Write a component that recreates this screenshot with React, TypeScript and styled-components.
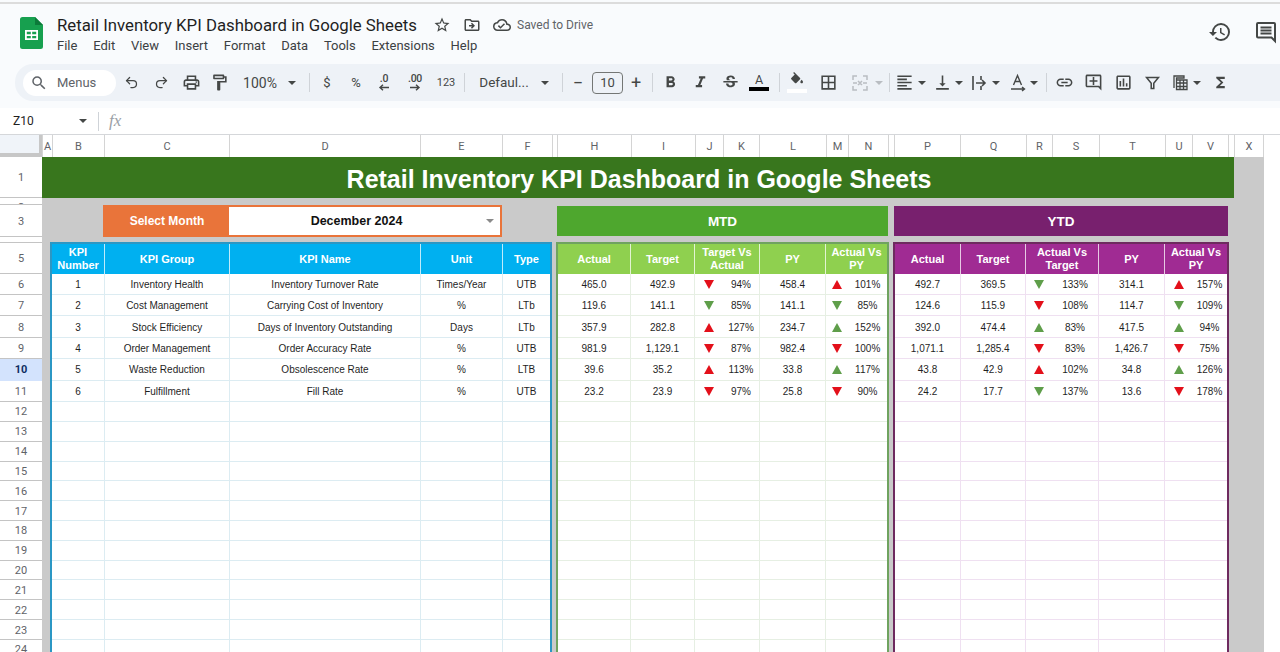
import styled, { createGlobalStyle } from 'styled-components';
import { Redo2, Undo2 } from 'lucide-react';
import {
  MdBorderAll,
  MdFormatAlignLeft,
  MdFormatBold,
  MdFormatItalic,
  MdFunctions,
  MdHistory,
  MdLink,
  MdOutlineAddComment,
  MdOutlineCloudDone,
  MdOutlineDriveFileMove,
  MdOutlineFormatPaint,
  MdOutlineInsertChart,
  MdOutlinePrint,
  MdSearch,
  MdStarBorder,
  MdStrikethroughS,
  MdVerticalAlignBottom,
} from 'react-icons/md';

const GlobalStyle = createGlobalStyle`
  html, body {
    margin: 0;
    padding: 0;
    height: 652px;
    overflow: hidden;
    background: #fff;
    font-family: "Liberation Sans", Arial, sans-serif;
  }
  * { box-sizing: border-box; }
`;

const Page = styled.div`
  width: 1280px;
  height: 652px;
  overflow: hidden;
  display: flex;
  flex-direction: column;
  background: #fff;
`;

const Chrome = styled.header`
  flex: none;
  height: 108px;
  padding-top: 2px;
  background: #f9fbfd;
  border-top: 2px solid transparent;
  box-shadow: inset 0 3px 0 -1px #dcdcdc;
  display: flex;
  flex-direction: column;
`;

const TitleBar = styled.div`
  height: 60px;
  display: flex;
  padding: 10px 0 0 20px;
`;

const Logo = styled.svg`
  width: 23px;
  height: 32px;
  margin-top: 3px;
  flex: none;
`;

const TitleBlock = styled.div`
  margin-left: 14px;
  display: flex;
  flex-direction: column;
`;

const TitleRow = styled.div`
  display: flex;
  align-items: center;
  height: 22px;
  color: #444746;
`;

const DocTitle = styled.div`
  font-family: Roboto, sans-serif;
  font-size: 16.8px;
  color: #1f1f1f;
  white-space: nowrap;
`;

const TitleIcon = styled.span<{ $ml: number }>`
  display: flex;
  margin-left: ${({ $ml }) => $ml}px;
  font-size: 18px;
`;

const SavedText = styled.span`
  margin-left: 6px;
  font-family: Roboto, sans-serif;
  font-size: 12px;
  color: #5f6368;
`;

const MenuBar = styled.nav`
  display: flex;
  gap: 15.75px;
  margin-top: 1px;
  font-family: Roboto, sans-serif;
  font-size: 13px;
  line-height: 17px;
  color: #3c4043;
`;

const RightIcons = styled.div`
  margin-left: auto;
  display: flex;
  gap: 22px;
  margin-top: 6px;
  margin-right: 2px;
  color: #444746;
  font-size: 24px;
  height: 24px;
`;

const Toolbar = styled.div`
  margin-left: 15px;
  height: 37px;
  padding-left: 8px;
  display: flex;
  align-items: center;
  background: #eef2f7;
  border-radius: 18px 0 0 18px;
  color: #444746;
`;

const SearchPill = styled.div`
  width: 93px;
  height: 26px;
  padding-left: 7px;
  display: flex;
  align-items: center;
  gap: 9px;
  background: #fff;
  border-radius: 13px;
  font-family: Roboto, sans-serif;
  font-size: 13px;
  color: #5f6368;
`;

const Tool = styled.div<{ $ml?: number; $w?: number; $off?: boolean }>`
  flex: none;
  width: ${({ $w }) => $w ?? 24}px;
  height: 24px;
  margin-left: ${({ $ml }) => $ml ?? 0}px;
  display: flex;
  flex-direction: column;
  align-items: center;
  justify-content: center;
  font-size: 19px;
  color: ${({ $off }) => ($off ? '#b9bdc2' : '#444746')};
  font-family: Roboto, sans-serif;
  white-space: nowrap;
`;

const ToolText = styled.span<{ $size?: number }>`
  font-size: ${({ $size }) => $size ?? 13}px;
  line-height: 1;
  color: #444746;
`;

const DecimalMark = styled.span`
  font-size: 10.5px;
  font-weight: 500;
  line-height: 10px;
  letter-spacing: -0.3px;
  color: #444746;
`;

const Caret = styled.span<{ $ml?: number; $off?: boolean }>`
  flex: none;
  width: 10px;
  margin-left: ${({ $ml }) => $ml ?? 0}px;
  display: flex;
  justify-content: center;
  &::after {
    content: '';
    border-left: 4px solid transparent;
    border-right: 4px solid transparent;
    border-top: 4px solid ${({ $off }) => ($off ? '#b9bdc2' : '#444746')};
  }
`;

const Separator = styled.span<{ $ml: number }>`
  flex: none;
  width: 1px;
  height: 19px;
  margin-left: ${({ $ml }) => $ml}px;
  background: #cfd3d8;
`;

const SizeBox = styled.div`
  flex: none;
  width: 31px;
  height: 22px;
  margin-left: 2px;
  display: flex;
  align-items: center;
  justify-content: center;
  border: 1px solid #747775;
  border-radius: 4px;
  font-family: Roboto, sans-serif;
  font-size: 13px;
  color: #444746;
`;

const ColorLetter = styled.span`
  font-size: 12.5px;
  line-height: 12px;
  color: #444746;
`;

const ColorBar = styled.span<{ $color: string; $w: number }>`
  width: ${({ $w }) => $w}px;
  height: 4px;
  margin-top: 1px;
  background: ${({ $color }) => $color};
`;

const FormulaBar = styled.div`
  flex: none;
  height: 27px;
  padding-left: 13px;
  display: flex;
  align-items: center;
  background: #fff;
  border-bottom: 1px solid #d5d7da;
`;

const NameBox = styled.span`
  width: 65px;
  font-family: Roboto, sans-serif;
  font-size: 12px;
  color: #1f1f1f;
`;

const FxMark = styled.span`
  margin-left: 10px;
  font-family: "Liberation Serif", serif;
  font-style: italic;
  font-size: 17px;
  color: #9aa0a6;
`;

const ColumnHeaders = styled.div`
  flex: none;
  height: 22px;
  display: flex;
  background: #fff;
`;

const CornerCell = styled.div`
  width: 42px;
  background: #f0f4f9;
  border-right: 3px solid #c7c7c7;
  border-bottom: 4px solid #c7c7c7;
`;

const ColumnLetter = styled.div<{ $w: number }>`
  flex: none;
  width: ${({ $w }) => $w}px;
  display: flex;
  align-items: center;
  justify-content: center;
  border-left: 1px solid #d4d4d4;
  font-family: Roboto, sans-serif;
  font-size: 11px;
  color: #5f6368;
  &:last-child { border-right: 1px solid #d4d4d4; }
`;

const SheetBody = styled.div`
  flex: 1;
  min-height: 0;
  display: flex;
  overflow: hidden;
`;

const RowHeaders = styled.div`
  flex: none;
  width: 42px;
  display: flex;
  flex-direction: column;
`;

const RowHead = styled.div<{ $h: number; $clip?: boolean; $active?: boolean }>`
  flex: none;
  height: ${({ $h }) => $h}px;
  overflow: hidden;
  display: flex;
  justify-content: center;
  align-items: ${({ $clip }) => ($clip ? 'flex-start' : 'center')};
  padding-top: ${({ $clip }) => ($clip ? 3 : 1)}px;
  border-bottom: 1px solid ${({ $active }) => ($active ? '#d3e3fd' : '#c4c4c4')};
  background: ${({ $active }) => ($active ? '#d3e3fd' : '#fff')};
  font-family: Roboto, sans-serif;
  font-size: 11px;
  line-height: 13px;
  font-weight: ${({ $active }) => ($active ? 700 : 400)};
  color: ${({ $active }) => ($active ? '#0f2f63' : '#5f6368')};
`;

const Canvas = styled.main`
  flex: none;
  width: 1222px;
  height: 517px;
  background: #cacaca;
  display: flex;
  flex-direction: column;
`;

const Banner = styled.div`
  flex: none;
  width: 1192px;
  height: 41px;
  padding: 4px 0 0 2px;
  display: flex;
  align-items: center;
  justify-content: center;
  background: #38761d;
  color: #fff;
  font-size: 25px;
  font-weight: 700;
`;

const ControlRow = styled.div`
  flex: none;
  height: 32px;
  margin-top: 7px;
  padding-left: 61px;
  display: flex;
`;

const MonthPicker = styled.div`
  width: 399px;
  display: flex;
  border: 2px solid #e9743a;
`;

const MonthLabel = styled.div`
  width: 124px;
  display: flex;
  align-items: center;
  justify-content: center;
  background: #e9743a;
  color: #fff;
  font-size: 12px;
  font-weight: 700;
`;

const MonthValue = styled.div`
  position: relative;
  flex: 1;
  padding-right: 16px;
  display: flex;
  align-items: center;
  justify-content: center;
  background: #fff;
  color: #111;
  font-size: 12.5px;
  font-weight: 700;
`;

const MonthCaret = styled.span`
  position: absolute;
  right: 6px;
  top: 12px;
  border-left: 4px solid transparent;
  border-right: 4px solid transparent;
  border-top: 4px solid #8a8a8a;
`;

const PeriodBar = styled.div<{ $bg: string; $w: number; $ml: number }>`
  width: ${({ $w }) => $w}px;
  margin-left: ${({ $ml }) => $ml}px;
  margin-top: 1px;
  margin-bottom: 1px;
  display: flex;
  align-items: center;
  justify-content: center;
  background: ${({ $bg }) => $bg};
  color: #fff;
  font-size: 13.5px;
  font-weight: 700;
`;

const Panels = styled.div`
  flex: 1;
  min-height: 0;
  margin-top: 5px;
  padding-left: 8px;
  display: flex;
  gap: 4px;
`;

const Panel = styled.section<{ $w: number; $border: string; $line: string }>`
  flex: none;
  width: ${({ $w }) => $w}px;
  height: 420px;
  border: 2px solid ${({ $border }) => $border};
  border-bottom: 0;
  background: #fff;
  --line: ${({ $line }) => $line};
`;

const Row = styled.div<{ $cols: string; $h: number }>`
  display: grid;
  grid-template-columns: ${({ $cols }) => $cols};
  height: ${({ $h }) => $h}px;
`;

const HeadCell = styled.div<{ $bg: string }>`
  display: flex;
  align-items: center;
  justify-content: center;
  padding: 0 2px;
  background: ${({ $bg }) => $bg};
  border-right: 1px solid rgba(255, 255, 255, 0.75);
  color: #fff;
  font-size: 11px;
  font-weight: 700;
  line-height: 12.5px;
  text-align: center;
  &:last-child { border-right: 0; }
`;

const Cell = styled.div`
  padding-top: 1px;
  display: flex;
  align-items: center;
  justify-content: center;
  border-right: 1px solid var(--line);
  border-bottom: 1px solid var(--line);
  color: #1f1f1f;
  font-size: 10px;
  white-space: nowrap;
  &:last-child { border-right: 0; }
`;

const CompareCell = styled.div<{ $split: number }>`
  padding-top: 1px;
  display: grid;
  grid-template-columns: ${({ $split }) => $split}px 1fr;
  align-items: center;
  justify-items: center;
  border-right: 1px solid var(--line);
  border-bottom: 1px solid var(--line);
  color: #1f1f1f;
  font-size: 10px;
  &:last-child { border-right: 0; }
`;

const Arrow = styled.span<{ $up: boolean; $good: boolean }>`
  width: 0;
  height: 0;
  border-left: 5px solid transparent;
  border-right: 5px solid transparent;
  ${({ $up, $good }) =>
    `border-${$up ? 'bottom' : 'top'}: 9px solid ${$good ? '#5f9e4a' : '#e3101a'};`}
`;

type Compare = [boolean, boolean, string];
type PeriodRow = { actual: string; target: string; first: Compare; py: string; second: Compare };

const columns: [string, number][] = [
  ['A', 10], ['B', 52], ['C', 125], ['D', 191], ['E', 82], ['F', 50], ['', 5],
  ['H', 74], ['I', 64], ['J', 28], ['K', 36], ['L', 67], ['M', 22], ['N', 40], ['', 6],
  ['P', 66], ['Q', 66], ['R', 26], ['S', 47], ['T', 66], ['U', 27], ['V', 36], ['', 6], ['X', 30],
];

const rowHeights = [41, 7, 32, 6, 30.7, 21.4, 21.4, 21.4, 21.4, 21.4, 21.4];
for (let i = 0; i < 13; i++) rowHeights.push(19.83);

const kpis = [
  ['1', 'Inventory Health', 'Inventory Turnover Rate', 'Times/Year', 'UTB'],
  ['2', 'Cost Management', 'Carrying Cost of Inventory', '%', 'LTb'],
  ['3', 'Stock Efficiency', 'Days of Inventory Outstanding', 'Days', 'LTb'],
  ['4', 'Order Management', 'Order Accuracy Rate', '%', 'UTB'],
  ['5', 'Waste Reduction', 'Obsolescence Rate', '%', 'LTB'],
  ['6', 'Fulfillment', 'Fill Rate', '%', 'UTB'],
];

const mtd: PeriodRow[] = [
  { actual: '465.0', target: '492.9', first: [false, false, '94%'], py: '458.4', second: [true, false, '101%'] },
  { actual: '119.6', target: '141.1', first: [false, true, '85%'], py: '141.1', second: [false, true, '85%'] },
  { actual: '357.9', target: '282.8', first: [true, false, '127%'], py: '234.7', second: [true, true, '152%'] },
  { actual: '981.9', target: '1,129.1', first: [false, false, '87%'], py: '982.4', second: [false, false, '100%'] },
  { actual: '39.6', target: '35.2', first: [true, false, '113%'], py: '33.8', second: [true, true, '117%'] },
  { actual: '23.2', target: '23.9', first: [false, false, '97%'], py: '25.8', second: [false, false, '90%'] },
];

const ytd: PeriodRow[] = [
  { actual: '492.7', target: '369.5', first: [false, true, '133%'], py: '314.1', second: [true, false, '157%'] },
  { actual: '124.6', target: '115.9', first: [false, false, '108%'], py: '114.7', second: [false, true, '109%'] },
  { actual: '392.0', target: '474.4', first: [true, true, '83%'], py: '417.5', second: [true, true, '94%'] },
  { actual: '1,071.1', target: '1,285.4', first: [false, false, '83%'], py: '1,426.7', second: [false, false, '75%'] },
  { actual: '43.8', target: '42.9', first: [true, false, '102%'], py: '34.8', second: [true, true, '126%'] },
  { actual: '24.2', target: '17.7', first: [false, true, '137%'], py: '13.6', second: [false, false, '178%'] },
];

const HEAD_H = 29.7;
const DATA_H = 21.4;
const EMPTY_H = 19.83;
const EMPTY_ROWS = Array.from({ length: 13 }, (_, i) => i);

const SheetsLogo = () => (
  <Logo viewBox="0 0 23 32">
    <path d="M2.5 0H15l8 8v21.5a2.5 2.5 0 0 1-2.5 2.5h-18A2.5 2.5 0 0 1 0 29.5v-27A2.5 2.5 0 0 1 2.5 0z" fill="#17a04f" />
    <path d="M15 0l8 8h-8z" fill="#0c7a3a" />
    <path d="M5 13h13v10H5z" fill="#fff" />
    <path d="M6.8 14.8h4v2.4h-4zM12.2 14.8h4v2.4h-4zM6.8 18.9h4v2.4h-4zM12.2 18.9h4v2.4h-4z" fill="#17a04f" />
  </Logo>
);

const CommentsIcon = () => (
  <svg width="24" height="24" viewBox="0 0 24 24" fill="none" stroke="currentColor" strokeWidth="2">
    <path d="M21 21l-3.5-3.5H4a1 1 0 0 1-1-1V4a1 1 0 0 1 1-1h16a1 1 0 0 1 1 1z" />
    <path d="M6.5 7.5h11M6.5 10.5h11M6.5 13.5h11" />
  </svg>
);

const SmallArrow = ({ left }: { left?: boolean }) => (
  <svg width="12" height="7" viewBox="0 0 12 7" fill="none" stroke="#444746" strokeWidth="1.4">
    {left ? <path d="M11 3.5H2M5 .8L2 3.5l3 2.7" /> : <path d="M1 3.5h9M7 .8l3 2.7-3 2.7" />}
  </svg>
);

const FillIcon = () => (
  <svg width="16" height="16" viewBox="0 0 24 24" fill="#444746">
    <path d="M16.56 8.94L7.62 0 6.21 1.41l2.38 2.38-5.15 5.15c-.59.59-.59 1.54 0 2.12l5.5 5.5c.29.29.68.44 1.06.44s.77-.15 1.06-.44l5.5-5.5c.59-.58.59-1.53 0-2.12z" />
    <path d="M19 11.5s-2 2.17-2 3.5c0 1.1.9 2 2 2s2-.9 2-2c0-1.33-2-3.5-2-3.5z" />
  </svg>
);

const MergeIcon = () => (
  <svg width="20" height="20" viewBox="0 0 20 20" fill="none" stroke="#b9bdc2" strokeWidth="1.5">
    <path d="M3 7V3h4M3 13v4h4M17 7V3h-4M17 13v4h-4M3 10h4M17 10h-4M8 8l2 2-2 2M12 8l-2 2 2 2" />
  </svg>
);

const WrapIcon = () => (
  <svg width="20" height="20" viewBox="0 0 20 20" fill="none" stroke="#444746" strokeWidth="1.6">
    <path d="M3 3v14M11 3v4M11 13v4M6 10h9M12 7l3 3-3 3" />
  </svg>
);

const RotateIcon = () => (
  <svg width="20" height="20" viewBox="0 0 20 20" fill="none" stroke="#444746" strokeWidth="1.4">
    <path d="M5.5 12L9.5 2.5 13.5 12M7 8.5h5M3 16h13M14 14l2.500 2-2.500 2" />
  </svg>
);

const FilterIcon = () => (
  <svg width="17" height="17" viewBox="0 0 20 20" fill="none" stroke="#444746" strokeWidth="1.8">
    <path d="M3 4h14l-5.500 7v6h-3v-6z" />
  </svg>
);

const FunctionTableIcon = () => (
  <svg width="20" height="20" viewBox="0 0 20 20" fill="none" stroke="#444746" strokeWidth="1.3">
    <path d="M4 15V3h10v2H6.500v11.500H17V7H6.500M6.500 10h10.500M6.500 13.500h10.500M10 7v9.500M13.500 7v9.500" />
  </svg>
);

const Comparison = ({ value, split }: { value: Compare; split: number }) => (
  <CompareCell $split={split}>
    <Arrow $up={value[0]} $good={value[1]} />
    <span>{value[2]}</span>
  </CompareCell>
);

type PeriodTableProps = {
  w: number;
  border: string;
  line: string;
  headBg: string;
  cols: string;
  firstSplit: number;
  secondSplit: number;
  firstLabel: string[];
  rows: PeriodRow[];
};

const PeriodTable = ({ w, border, line, headBg, cols, firstSplit, secondSplit, firstLabel, rows }: PeriodTableProps) => (
  <Panel $w={w} $border={border} $line={line}>
    <Row $cols={cols} $h={HEAD_H}>
      <HeadCell $bg={headBg}>Actual</HeadCell>
      <HeadCell $bg={headBg}>Target</HeadCell>
      <HeadCell $bg={headBg}>{firstLabel[0]}<br />{firstLabel[1]}</HeadCell>
      <HeadCell $bg={headBg}>PY</HeadCell>
      <HeadCell $bg={headBg}>Actual Vs<br />PY</HeadCell>
    </Row>
    {rows.map((r) => (
      <Row key={r.actual} $cols={cols} $h={DATA_H}>
        <Cell>{r.actual}</Cell>
        <Cell>{r.target}</Cell>
        <Comparison value={r.first} split={firstSplit} />
        <Cell>{r.py}</Cell>
        <Comparison value={r.second} split={secondSplit} />
      </Row>
    ))}
    {EMPTY_ROWS.map((i) => (
      <Row key={i} $cols={cols} $h={EMPTY_H}>
        <Cell /><Cell /><Cell /><Cell /><Cell />
      </Row>
    ))}
  </Panel>
);

const KPI_COLS = '53px 125px 191px 82px 47px';

const App = () => (
  <Page>
    <GlobalStyle />
    <Chrome>
      <TitleBar>
        <SheetsLogo />
        <TitleBlock>
          <TitleRow>
            <DocTitle>Retail Inventory KPI Dashboard in Google Sheets</DocTitle>
            <TitleIcon $ml={16}><MdStarBorder /></TitleIcon>
            <TitleIcon $ml={12}><MdOutlineDriveFileMove /></TitleIcon>
            <TitleIcon $ml={12}><MdOutlineCloudDone /></TitleIcon>
            <SavedText>Saved to Drive</SavedText>
          </TitleRow>
          <MenuBar>
            <span>File</span><span>Edit</span><span>View</span><span>Insert</span>
            <span>Format</span><span>Data</span><span>Tools</span><span>Extensions</span><span>Help</span>
          </MenuBar>
        </TitleBlock>
        <RightIcons>
          <MdHistory />
          <CommentsIcon />
        </RightIcons>
      </TitleBar>
      <Toolbar>
        <SearchPill><MdSearch size={18} />Menus</SearchPill>
        <Tool $ml={3}><Undo2 size={15} strokeWidth={2} /></Tool>
        <Tool $ml={6}><Redo2 size={15} strokeWidth={2} /></Tool>
        <Tool $ml={6}><MdOutlinePrint /></Tool>
        <Tool $ml={4}><MdOutlineFormatPaint /></Tool>
        <Tool $ml={10} $w={38}><ToolText $size={14}>100%</ToolText></Tool>
        <Caret $ml={8} />
        <Separator $ml={12} />
        <Tool $ml={5}><ToolText>$</ToolText></Tool>
        <Tool $ml={5}><ToolText>%</ToolText></Tool>
        <Tool $ml={4}><DecimalMark>.0</DecimalMark><SmallArrow left /></Tool>
        <Tool $ml={7}><DecimalMark>.00</DecimalMark><SmallArrow /></Tool>
        <Tool $ml={7}><ToolText $size={11}>123</ToolText></Tool>
        <Separator $ml={6} />
        <Tool $ml={13} $w={52}><ToolText $size={13.5}>Defaul...</ToolText></Tool>
        <Caret $ml={10} />
        <Separator $ml={12} />
        <Tool $ml={3}><ToolText $size={18}>−</ToolText></Tool>
        <SizeBox>10</SizeBox>
        <Tool $ml={1}><ToolText $size={18}>+</ToolText></Tool>
        <Separator $ml={4} />
        <Tool $ml={5}><MdFormatBold /></Tool>
        <Tool $ml={6}><MdFormatItalic /></Tool>
        <Tool $ml={6}><MdStrikethroughS /></Tool>
        <Tool $ml={5}><ColorLetter>A</ColorLetter><ColorBar $color="#000" $w={20} /></Tool>
        <Separator $ml={8} />
        <Tool $ml={5}><FillIcon /><ColorBar $color="#fff" $w={20} /></Tool>
        <Tool $ml={7}><MdBorderAll /></Tool>
        <Tool $ml={8} $off><MergeIcon /></Tool>
        <Caret $ml={2} $off />
        <Separator $ml={5} />
        <Tool $ml={2}><MdFormatAlignLeft /></Tool>
        <Caret $ml={1} />
        <Tool $ml={3}><MdVerticalAlignBottom /></Tool>
        <Caret />
        <Tool $ml={5} $w={22}><WrapIcon /></Tool>
        <Caret />
        <Tool $ml={6} $w={22}><RotateIcon /></Tool>
        <Caret />
        <Separator $ml={7} />
        <Tool $ml={5}><MdLink /></Tool>
        <Tool $ml={5}><MdOutlineAddComment /></Tool>
        <Tool $ml={6}><MdOutlineInsertChart /></Tool>
        <Tool $ml={5}><FilterIcon /></Tool>
        <Tool $ml={4}><FunctionTableIcon /></Tool>
        <Caret />
        <Tool $ml={6}><MdFunctions size={17} /></Tool>
      </Toolbar>
    </Chrome>
    <FormulaBar>
      <NameBox>Z10</NameBox>
      <Caret />
      <Separator $ml={10} />
      <FxMark>fx</FxMark>
    </FormulaBar>
    <ColumnHeaders>
      <CornerCell />
      {columns.map(([letter, w], i) => (
        <ColumnLetter key={i} $w={w}>{letter}</ColumnLetter>
      ))}
    </ColumnHeaders>
    <SheetBody>
      <RowHeaders>
        {rowHeights.map((h, i) => (
          <RowHead key={i} $h={h} $clip={i === 1 || i === 3} $active={i === 9}>{i + 1}</RowHead>
        ))}
      </RowHeaders>
      <Canvas>
        <Banner>Retail Inventory KPI Dashboard in Google Sheets</Banner>
        <ControlRow>
          <MonthPicker>
            <MonthLabel>Select Month</MonthLabel>
            <MonthValue>December 2024<MonthCaret /></MonthValue>
          </MonthPicker>
          <PeriodBar $bg="#4ea72e" $w={331} $ml={55}>MTD</PeriodBar>
          <PeriodBar $bg="#78206e" $w={334} $ml={6}>YTD</PeriodBar>
        </ControlRow>
        <Panels>
          <Panel $w={502} $border="#2b97c4" $line="#dcecf2">
            <Row $cols={KPI_COLS} $h={HEAD_H}>
              <HeadCell $bg="#00b0f0">KPI<br />Number</HeadCell>
              <HeadCell $bg="#00b0f0">KPI Group</HeadCell>
              <HeadCell $bg="#00b0f0">KPI Name</HeadCell>
              <HeadCell $bg="#00b0f0">Unit</HeadCell>
              <HeadCell $bg="#00b0f0">Type</HeadCell>
            </Row>
            {kpis.map((row) => (
              <Row key={row[0]} $cols={KPI_COLS} $h={DATA_H}>
                {row.map((text, i) => <Cell key={i}>{text}</Cell>)}
              </Row>
            ))}
            {EMPTY_ROWS.map((i) => (
              <Row key={i} $cols={KPI_COLS} $h={EMPTY_H}>
                <Cell /><Cell /><Cell /><Cell /><Cell />
              </Row>
            ))}
          </Panel>
          <PeriodTable
            w={333}
            border="#6fa35f"
            line="#e6efe3"
            headBg="#8fd04f"
            cols="73px 64px 65px 66px 61px"
            firstSplit={28}
            secondSplit={22}
            firstLabel={['Target Vs', 'Actual']}
            rows={mtd}
          />
          <PeriodTable
            w={336}
            border="#6e2a5f"
            line="#efe0f1"
            headBg="#a02b93"
            cols="66px 65px 73px 66px 62px"
            firstSplit={26}
            secondSplit={27}
            firstLabel={['Actual Vs', 'Target']}
            rows={ytd}
          />
        </Panels>
      </Canvas>
    </SheetBody>
  </Page>
);

export default App;
